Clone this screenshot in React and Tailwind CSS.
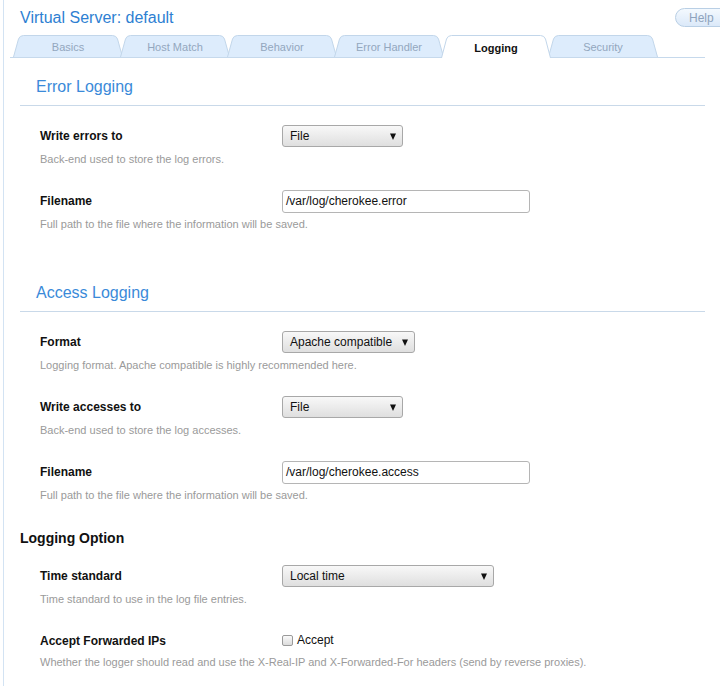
import React from 'react';

const tabs = ['Basics', 'Host Match', 'Behavior', 'Error Handler', 'Logging', 'Security'];

const Arrow = () => (
  <svg width="6" height="7" viewBox="0 0 6 7">
    <path d="M0 0.5 L6 0.5 L3 7 Z" fill="#111" />
  </svg>
);

const Select = ({ value, width }) => (
  <div className={`flex h-[22px] ${width} items-center justify-between rounded-[3px] border border-[#a8a8a8] bg-linear-to-b from-[#f8f8f8] to-[#dfdfdf] pl-[7px] pr-[6px] text-[12px] text-[#111]`}>
    <span>{value}</span>
    <Arrow />
  </div>
);

const TextInput = ({ value }) => (
  <div className="flex h-[23px] w-[248px] items-center rounded-[3px] border border-[#b5b5b5] bg-white pl-[3px] text-[12px] text-[#111]">
    {value}
  </div>
);

const Tab = ({ label, active }) => (
  <div className={`relative -mr-[3px] flex w-[110px] items-center justify-center ${active ? 'z-10 -mb-px h-[23px]' : 'h-[22px]'}`}>
    <svg className="absolute inset-0" width="110" height={active ? 23 : 22} viewBox={`0 0 110 ${active ? 23 : 22}`}>
      <path
        d={active ? 'M0.5 23 L5.5 4 Q6.8 0.5 10.5 0.5 L99.5 0.5 Q103.2 0.5 104.5 4 L109.5 23' : 'M0.5 22 L5.5 4 Q6.8 0.5 10.5 0.5 L99.5 0.5 Q103.2 0.5 104.5 4 L109.5 22'}
        fill={active ? '#ffffff' : '#ddecfc'}
        stroke="#c2d6ea"
      />
    </svg>
    <span className={`relative pb-[1px] pt-[4px] text-[11px] ${active ? 'font-bold text-[#111]' : 'text-[#93a7be]'}`}>{label}</span>
  </div>
);

const Row = ({ label, desc, children, descGap = 'mt-[5px]' }) => (
  <div className="mb-[24px] pl-[20px]">
    <div className="flex h-[22px] items-center">
      <div className="w-[242px] text-[12px] font-bold text-[#111]">{label}</div>
      {children}
    </div>
    <div className={`${descGap} text-[11px] leading-[14px] text-[#9a9a9a]`}>{desc}</div>
  </div>
);

const SectionTitle = ({ title }) => (
  <div className="mb-[19px] w-[685px] border-b border-[#c9d9e9] pb-[9px] pl-[16px] text-[16px] leading-[18px] text-[#3a8ad9]">
    {title}
  </div>
);

export default function App() {
  return (
    <div className="h-[686px] w-[720px] overflow-hidden bg-white font-['Liberation_Sans',Arial,sans-serif]">
      <div className="ml-[3px] h-full border-l border-[#d3e3f3] pl-[6px]">
        {/* header */}
        <div className="flex h-[35px] items-start justify-between">
          <div className="pl-[10px] pt-[8px] text-[16px] leading-[19px] text-[#2e7fd2]">Virtual Server: default</div>
          <div className="-mr-[20px] mt-[8px] flex h-[19px] w-[65px] items-center rounded-full border border-[#b9cfe5] bg-linear-to-b from-[#f4f9fe] to-[#dbe9f9] pl-[13px] text-[12px] text-[#8ea3bc]">
            Help
          </div>
        </div>

        {/* tabs */}
        <div className="flex w-[695px] items-end border-b border-[#c6d9ec] pl-[3px]">
          {tabs.map((t) => (
            <Tab key={t} label={t} active={t === 'Logging'} />
          ))}
        </div>

        <div className="flex flex-col pl-[10px]">
          <div className="mt-[20px] flex flex-col">
            <SectionTitle title="Error Logging" />
            <Row label="Write errors to" desc="Back-end used to store the log errors.">
              <Select value="File" width="w-[121px]" />
            </Row>
            <Row label="Filename" desc="Full path to the file where the information will be saved.">
              <TextInput value="/var/log/cherokee.error" />
            </Row>
          </div>

          <div className="mt-[29px] flex flex-col">
            <SectionTitle title="Access Logging" />
            <Row label="Format" desc="Logging format. Apache compatible is highly recommended here.">
              <Select value="Apache compatible" width="w-[133px]" />
            </Row>
            <Row label="Write accesses to" desc="Back-end used to store the log accesses.">
              <Select value="File" width="w-[121px]" />
            </Row>
            <Row label="Filename" desc="Full path to the file where the information will be saved.">
              <TextInput value="/var/log/cherokee.access" />
            </Row>
          </div>

          <div className="mt-[4px] flex flex-col">
            <div className="mb-[18px] text-[14px] font-bold leading-[17px] text-[#111]">Logging Option</div>
            <Row label="Time standard" desc="Time standard to use in the log file entries.">
              <Select value="Local time" width="w-[212px]" />
            </Row>
            <Row
              label="Accept Forwarded IPs"
              descGap="mt-[3px]"
              desc="Whether the logger should read and use the X-Real-IP and X-Forwarded-For headers (send by reverse proxies)."
            >
              <div className="-mt-[2px] flex items-center gap-[4px] text-[12px] text-[#111]">
                <div className="h-[11px] w-[11px] rounded-[2px] border border-[#9a9a9a] bg-linear-to-b from-[#fafafa] to-[#dcdcdc]" />
                <span>Accept</span>
              </div>
            </Row>
          </div>
        </div>
      </div>
    </div>
  );
}
